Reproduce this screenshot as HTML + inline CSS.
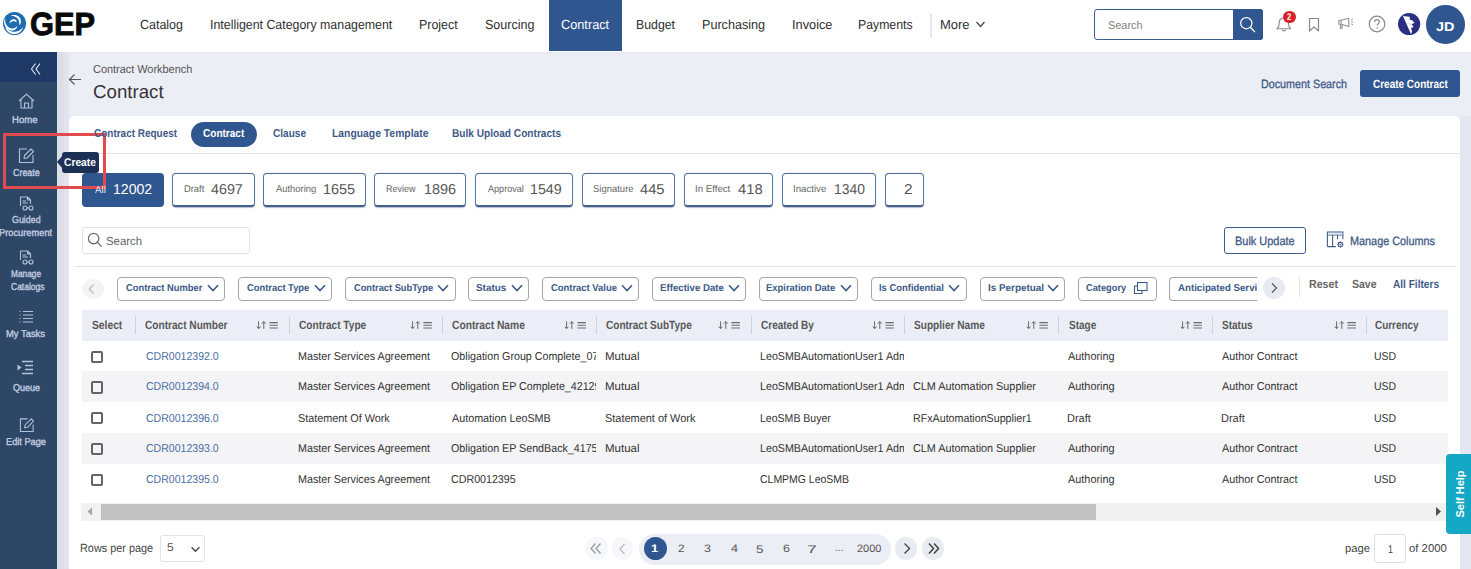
<!DOCTYPE html>
<html><head><meta charset="utf-8"><style>
html,body{margin:0;padding:0;width:1471px;height:569px;overflow:hidden;background:#fff}
body{position:relative;font-family:"Liberation Sans",sans-serif}
body div, body svg, body span.t{position:absolute}
span.t{white-space:nowrap;transform-origin:0 0;display:block;text-rendering:geometricPrecision;z-index:2}
</style></head><body>
<div style="left:0.00px;top:0.00px;width:1471.00px;height:51.00px;background:#fff"></div>
<div style="left:0.00px;top:52.00px;width:1471.00px;height:517.00px;background:#eceef6"></div>
<div style="left:57.00px;top:52.00px;width:1414.00px;height:3.00px;background:linear-gradient(#e7e8ee,#eceef6)"></div>
<div style="left:0.00px;top:51.50px;width:57.00px;height:517.50px;background:#2f4767"></div>
<div style="left:0.00px;top:51.50px;width:57.00px;height:30.20px;background:#1e3965"></div>
<div style="left:57.00px;top:52.00px;width:12.00px;height:517.00px;background:linear-gradient(90deg,#d8e2ec 0px,#d8e2ec 1px,#dcdce4 1.5px,#dddde5 6px,#e1e2eb 7px,#e2e3ec 12px)"></div>
<div style="left:1460.00px;top:116.00px;width:11.00px;height:453.00px;background:#e4e6f1"></div>
<div style="left:69.00px;top:116.00px;width:1391.00px;height:453.00px;background:#fff;border-radius:6px 6px 0 0"></div>
<svg style="left:3px;top:12px;width:23px;height:23px" viewBox="0 0 46 46">
<circle cx="23" cy="23" r="23" fill="#1f6cb0"/>
<path d="M4.85 29.61 L4.93 30.81 L5.23 31.96 L5.63 33.08 L6.12 34.17 L6.70 35.23 L7.35 36.25 L8.07 37.23 L8.87 38.15 L9.73 39.03 L10.64 39.85 L11.62 40.61 L12.65 41.30 L13.72 41.92 L14.83 42.48 L15.98 42.95 L17.16 43.35 L18.37 43.67 L19.59 43.91 L20.83 44.07 L22.08 44.14 L23.32 44.13 L24.56 44.04 L25.79 43.86 L27.00 43.60 L28.19 43.27 L29.35 42.85 L30.48 42.36 L31.57 41.80 L32.61 41.17 L33.60 40.47 L34.54 39.71 L35.42 38.89 L36.23 38.02 L36.98 37.11 L37.66 36.14 L38.26 35.14 L38.79 34.10 L39.22 33.04 L39.55 31.94 L39.68 30.78 L39.68 30.78 L38.87 31.57 L38.15 32.38 L37.43 33.15 L36.68 33.88 L35.91 34.58 L35.12 35.23 L34.30 35.83 L33.47 36.39 L32.61 36.91 L31.73 37.38 L30.83 37.81 L29.92 38.19 L29.00 38.52 L28.06 38.81 L27.11 39.05 L26.16 39.24 L25.19 39.39 L24.23 39.49 L23.25 39.54 L22.28 39.54 L21.30 39.50 L20.33 39.41 L19.36 39.27 L18.39 39.08 L17.43 38.85 L16.47 38.56 L15.53 38.23 L14.60 37.85 L13.68 37.42 L12.78 36.94 L11.89 36.41 L11.03 35.84 L10.19 35.21 L9.37 34.54 L8.58 33.82 L7.81 33.05 L7.07 32.24 L6.35 31.39 L5.64 30.50 L4.85 29.61Z" fill="#fff"/><path d="M4.47 11.42 L3.66 12.79 L3.09 14.28 L2.67 15.81 L2.39 17.36 L2.24 18.92 L2.22 20.47 L2.33 22.00 L2.56 23.50 L2.91 24.96 L3.37 26.37 L3.94 27.73 L4.61 29.01 L5.37 30.22 L6.22 31.35 L7.15 32.38 L8.14 33.32 L9.20 34.17 L10.30 34.90 L11.45 35.53 L12.62 36.05 L13.81 36.46 L15.01 36.76 L16.21 36.94 L17.39 37.02 L18.55 36.99 L19.68 36.86 L20.77 36.64 L21.81 36.31 L22.79 35.91 L23.71 35.42 L24.55 34.86 L25.31 34.24 L25.98 33.56 L26.57 32.84 L27.06 32.07 L27.46 31.28 L27.75 30.47 L27.94 29.64 L28.01 28.80 L27.88 27.88 L27.88 27.88 L27.50 28.21 L27.19 28.63 L26.86 29.07 L26.50 29.50 L26.10 29.93 L25.67 30.35 L25.19 30.75 L24.67 31.13 L24.11 31.49 L23.50 31.82 L22.85 32.11 L22.16 32.36 L21.44 32.57 L20.67 32.74 L19.87 32.85 L19.04 32.90 L18.18 32.89 L17.30 32.81 L16.40 32.67 L15.48 32.45 L14.56 32.16 L13.63 31.78 L12.71 31.33 L11.79 30.79 L10.89 30.17 L10.02 29.46 L9.18 28.66 L8.38 27.78 L7.63 26.81 L6.93 25.76 L6.29 24.63 L5.73 23.42 L5.25 22.14 L4.85 20.79 L4.55 19.37 L4.34 17.90 L4.24 16.37 L4.24 14.79 L4.35 13.16 L4.47 11.42Z" fill="#fff"/><path d="M15.81 7.57 L16.64 6.99 L17.56 6.60 L18.52 6.29 L19.49 6.06 L20.48 5.91 L21.48 5.83 L22.48 5.82 L23.48 5.87 L24.46 6.00 L25.44 6.19 L26.39 6.45 L27.32 6.77 L28.22 7.15 L29.08 7.59 L29.91 8.09 L30.70 8.64 L31.44 9.24 L32.14 9.88 L32.78 10.56 L33.36 11.29 L33.89 12.04 L34.36 12.82 L34.77 13.63 L35.11 14.45 L35.39 15.29 L35.61 16.14 L35.76 16.99 L35.85 17.83 L35.88 18.67 L35.84 19.50 L35.74 20.31 L35.57 21.10 L35.36 21.86 L35.08 22.59 L34.75 23.28 L34.37 23.93 L33.93 24.54 L33.45 25.10 L32.90 25.59 L32.19 25.99 L32.19 25.99 L32.15 25.40 L32.22 24.85 L32.29 24.31 L32.35 23.77 L32.40 23.23 L32.44 22.68 L32.45 22.13 L32.44 21.57 L32.41 21.01 L32.35 20.45 L32.28 19.88 L32.17 19.31 L32.04 18.74 L31.88 18.17 L31.70 17.59 L31.48 17.01 L31.24 16.44 L30.96 15.87 L30.66 15.30 L30.32 14.73 L29.94 14.17 L29.53 13.62 L29.08 13.08 L28.60 12.55 L28.08 12.04 L27.53 11.54 L26.93 11.06 L26.30 10.60 L25.63 10.17 L24.92 9.76 L24.17 9.39 L23.39 9.04 L22.57 8.73 L21.72 8.46 L20.83 8.23 L19.90 8.04 L18.95 7.90 L17.96 7.79 L16.92 7.71 L15.81 7.57Z" fill="#fff"/><path d="M13.80 23.00 L13.61 22.38 L13.58 21.76 L13.62 21.13 L13.73 20.52 L13.89 19.91 L14.10 19.31 L14.36 18.74 L14.66 18.19 L15.01 17.66 L15.40 17.17 L15.82 16.70 L16.28 16.28 L16.77 15.89 L17.28 15.55 L17.82 15.25 L18.38 14.99 L18.95 14.78 L19.53 14.62 L20.12 14.51 L20.71 14.45 L21.30 14.43 L21.88 14.47 L22.45 14.55 L23.00 14.67 L23.53 14.84 L24.05 15.06 L24.53 15.31 L24.98 15.60 L25.40 15.92 L25.79 16.27 L26.13 16.65 L26.43 17.05 L26.69 17.47 L26.91 17.91 L27.07 18.36 L27.19 18.81 L27.25 19.27 L27.26 19.73 L27.19 20.20 L26.98 20.70 L26.98 20.70 L26.65 20.56 L26.41 20.38 L26.19 20.21 L25.97 20.03 L25.75 19.86 L25.54 19.70 L25.31 19.54 L25.09 19.39 L24.85 19.24 L24.61 19.10 L24.37 18.97 L24.11 18.85 L23.85 18.74 L23.58 18.63 L23.29 18.53 L23.00 18.45 L22.70 18.37 L22.38 18.31 L22.06 18.26 L21.72 18.22 L21.37 18.20 L21.01 18.20 L20.64 18.22 L20.26 18.26 L19.87 18.32 L19.48 18.41 L19.07 18.52 L18.66 18.66 L18.25 18.83 L17.83 19.03 L17.41 19.27 L17.00 19.53 L16.58 19.84 L16.18 20.17 L15.78 20.55 L15.39 20.96 L15.01 21.41 L14.64 21.90 L14.26 22.43 L13.80 23.00Z" fill="#fff"/>
</svg>
<span class="t" style="left:29.98px;top:8.46px;font-size:32.17px;line-height:32.17px;font-weight:700;color:#0a0a0a;transform:scaleX(0.9582);-webkit-text-stroke:0.9px #0a0a0a;">GEP</span>
<span class="t" style="left:140.05px;top:17.54px;font-size:13.19px;line-height:13.19px;font-weight:400;color:#2f2f2f;transform:scaleX(0.9454);">Catalog</span>
<span class="t" style="left:209.59px;top:17.54px;font-size:13.19px;line-height:13.19px;font-weight:400;color:#2f2f2f;transform:scaleX(0.9384);">Intelligent Category management</span>
<span class="t" style="left:419.27px;top:17.54px;font-size:13.19px;line-height:13.19px;font-weight:400;color:#2f2f2f;transform:scaleX(0.9398);">Project</span>
<span class="t" style="left:485.43px;top:17.54px;font-size:13.19px;line-height:13.19px;font-weight:400;color:#2f2f2f;transform:scaleX(0.9495);">Sourcing</span>
<span class="t" style="left:635.97px;top:17.54px;font-size:13.19px;line-height:13.19px;font-weight:400;color:#2f2f2f;transform:scaleX(0.9335);">Budget</span>
<span class="t" style="left:702.45px;top:17.54px;font-size:13.19px;line-height:13.19px;font-weight:400;color:#2f2f2f;transform:scaleX(0.9555);">Purchasing</span>
<span class="t" style="left:791.74px;top:17.54px;font-size:13.19px;line-height:13.19px;font-weight:400;color:#2f2f2f;transform:scaleX(0.9682);">Invoice</span>
<span class="t" style="left:858.47px;top:17.54px;font-size:13.19px;line-height:13.19px;font-weight:400;color:#2f2f2f;transform:scaleX(0.9303);">Payments</span>
<span class="t" style="left:940.39px;top:17.54px;font-size:13.19px;line-height:13.19px;font-weight:400;color:#2f2f2f;transform:scaleX(0.9852);">More</span>
<div style="left:548.50px;top:0.00px;width:73.30px;height:50.50px;background:#30568f"></div>
<span class="t" style="left:560.97px;top:17.54px;font-size:13.19px;line-height:13.19px;font-weight:400;color:#fff;transform:scaleX(0.9655);">Contract</span>
<div style="left:930.00px;top:14.00px;width:1.50px;height:24.00px;background:#e4e7ef"></div>
<svg style="left:975px;top:20px;width:11px;height:9px" viewBox="0 0 11 9"><path d="M1.5 2 L5.5 6.5 L9.5 2" fill="none" stroke="#444" stroke-width="1.3"/></svg>
<div style="left:1094.00px;top:9.30px;width:169.00px;height:30.30px;background:#fff;border:1px solid #3a5c8f;border-radius:3px;box-sizing:border-box"></div>
<div style="left:1233.00px;top:9.30px;width:30.00px;height:30.30px;background:#30568f;border-radius:0 3px 3px 0"></div>
<span class="t" style="left:1108.41px;top:21.03px;font-size:11.30px;line-height:11.30px;font-weight:400;color:#808080;transform:scaleX(0.9657);">Search</span>
<svg style="left:1238px;top:15px;width:20px;height:20px" viewBox="0 0 20 20"><circle cx="8.3" cy="8.2" r="5.6" fill="none" stroke="#fff" stroke-width="1.2"/><path d="M12.3 12.3 L17 17" stroke="#fff" stroke-width="1.3"/></svg>
<svg style="left:1275px;top:15px;width:20px;height:20px" viewBox="0 0 20 20"><path d="M2 13.8 L15.7 13.8 C14.2 12.6 13.5 11.3 13.5 9 L13.5 7.5 C13.5 4.8 11.8 3 8.85 3 C5.9 3 4.2 4.8 4.2 7.5 L4.2 9 C4.2 11.3 3.5 12.6 2 13.8 Z" fill="none" stroke="#8c8c8c" stroke-width="1.1" stroke-linejoin="round"/><path d="M7.2 14.6 C7.2 16.4 10.5 16.4 10.5 14.6" fill="none" stroke="#8c8c8c" stroke-width="1.1"/></svg>
<div style="left:1283.2px;top:10.5px;width:12.4px;height:12.4px;border-radius:50%;background:#dc1f26"></div>
<span class="t" style="left:1287.26px;top:13.06px;font-size:9.86px;line-height:9.86px;font-weight:700;color:#fff;transform:scaleX(0.7787);">2</span>
<svg style="left:1307px;top:17px;width:14px;height:16px" viewBox="0 0 14 16"><path d="M2.5 1.5 L11.5 1.5 L11.5 14 L7 10 L2.5 14 Z" fill="none" stroke="#8a8a8a" stroke-width="1.2" stroke-linejoin="round"/></svg>
<svg style="left:1336px;top:15px;width:20px;height:16px" viewBox="0 0 20 16"><path d="M2.9 5.2 L5.2 5.2 L12.8 3.2 L12.8 11.6 L5.2 9.2 L2.9 9.2 Z M5.2 5.2 L5.2 9.2" fill="none" stroke="#8f8f8f" stroke-width="1.1" stroke-linejoin="round"/><path d="M4.4 9.3 L4.4 13.2 L6.1 13.2 L6.1 9.5" fill="none" stroke="#8f8f8f" stroke-width="1.1"/><path d="M15.2 4.8 L16.9 3.8 M15.2 6.8 L17 7 M15.2 8.9 L16.9 9.8" stroke="#8f8f8f" stroke-width="1"/></svg>
<svg style="left:1368px;top:15px;width:18px;height:18px" viewBox="0 0 18 18"><circle cx="9" cy="9" r="7.8" fill="none" stroke="#8a8a8a" stroke-width="1.2"/><path d="M6.6 7 C6.6 5.3 7.8 4.6 9 4.6 C10.3 4.6 11.4 5.4 11.4 6.8 C11.4 8.4 9.2 8.6 9.2 10.6" fill="none" stroke="#8a8a8a" stroke-width="1.2"/><circle cx="9.2" cy="13" r="0.8" fill="#8a8a8a"/></svg>
<svg style="left:1398.4px;top:12.7px;width:22.2px;height:22.2px" viewBox="0 0 46 46"><circle cx="23" cy="23" r="23" fill="#2a2f84"/><path d="M9.9 5.4 L13.7 6.8 L24 7.9 L25 14.1 L29.2 15.1 L34.4 20.3 L28.2 23.4 L32.3 28.6 L27.1 31.7 L29.2 37.9 L27.1 44.1 L26.1 42 Z" fill="#fff"/><path d="M17 12 L24 14 M19 22 L28 23" stroke="#c9cbe6" stroke-width="1.2"/></svg>
<div style="left:1426px;top:5.2px;width:38.6px;height:38.6px;border-radius:50%;background:#30568f"></div>
<span class="t" style="left:1436.00px;top:20.70px;font-size:12.75px;line-height:12.75px;font-weight:700;color:#fff;transform:scaleX(1.1290);">JD</span>
<svg style="left:30px;top:61.5px;width:12px;height:14px" viewBox="0 0 12 14"><path d="M5.5 1.5 L1.5 7 L5.5 12.5 M10 1.5 L6 7 L10 12.5" fill="none" stroke="#e8edf5" stroke-width="1.1"/></svg>
<svg style="left:18px;top:93px;width:17px;height:16px" viewBox="0 0 17 16"><path d="M1 8 L8.5 1.2 L16 8 M3 6.5 L3 15 L14 15 L14 6.5 M6.5 15 L6.5 10 L10.5 10 L10.5 15" fill="none" stroke="#b4c2da" stroke-width="1.1" stroke-linejoin="round"/></svg>
<span class="t" style="left:12.43px;top:115.64px;font-size:10.00px;line-height:10.00px;font-weight:400;color:#c3cfe3;transform:scaleX(0.9553);-webkit-text-stroke:0.35px #c3cfe3;">Home</span>
<svg style="left:18px;top:147px;width:17px;height:17px" viewBox="0 0 17 17"><path d="M9 2 L1.5 2 L1.5 15.5 L15 15.5 L15 8" fill="none" stroke="#b4c2da" stroke-width="1.1"/><path d="M6 11.5 L6.5 8.5 L13 2 L15.5 4.5 L9 11 Z" fill="none" stroke="#b4c2da" stroke-width="1.1" stroke-linejoin="round"/></svg>
<span class="t" style="left:12.79px;top:169.41px;font-size:10.14px;line-height:10.14px;font-weight:400;color:#c3cfe3;transform:scaleX(0.8809);-webkit-text-stroke:0.35px #c3cfe3;">Create</span>
<svg style="left:19px;top:195.5px;width:16px;height:15px" viewBox="0 0 16 15"><path d="M1.5 10 L1.5 1 L8.5 1 L11.5 4 L11.5 8 M8.5 1 L8.5 4 L11.5 4" fill="none" stroke="#b4c2da" stroke-width="1.1" stroke-linejoin="round"/><path d="M3.5 5 L7 5 M3.5 7 L9 7" stroke="#b4c2da" stroke-width="1"/><circle cx="6" cy="12" r="2" fill="none" stroke="#b4c2da" stroke-width="1.1"/><circle cx="12" cy="12" r="2" fill="none" stroke="#b4c2da" stroke-width="1.1"/><path d="M8 12 L10 12" stroke="#b4c2da" stroke-width="1"/></svg>
<span class="t" style="left:12.00px;top:215.94px;font-size:10.00px;line-height:10.00px;font-weight:400;color:#c3cfe3;transform:scaleX(0.8870);-webkit-text-stroke:0.35px #c3cfe3;">Guided</span>
<span class="t" style="left:-0.53px;top:229.44px;font-size:10.00px;line-height:10.00px;font-weight:400;color:#c3cfe3;transform:scaleX(0.9280);-webkit-text-stroke:0.35px #c3cfe3;">Procurement</span>
<svg style="left:19px;top:249.5px;width:16px;height:15px" viewBox="0 0 16 15"><path d="M1.5 10 L1.5 1 L8.5 1 L11.5 4 L11.5 8 M8.5 1 L8.5 4 L11.5 4" fill="none" stroke="#b4c2da" stroke-width="1.1" stroke-linejoin="round"/><path d="M3.5 5 L7 5 M3.5 7 L9 7" stroke="#b4c2da" stroke-width="1"/><circle cx="6" cy="12" r="2" fill="none" stroke="#b4c2da" stroke-width="1.1"/><circle cx="12" cy="12" r="2" fill="none" stroke="#b4c2da" stroke-width="1.1"/><path d="M8 12 L10 12" stroke="#b4c2da" stroke-width="1"/></svg>
<span class="t" style="left:11.45px;top:269.94px;font-size:10.00px;line-height:10.00px;font-weight:400;color:#c3cfe3;transform:scaleX(0.8309);-webkit-text-stroke:0.35px #c3cfe3;">Manage</span>
<span class="t" style="left:11.00px;top:282.94px;font-size:10.00px;line-height:10.00px;font-weight:400;color:#c3cfe3;transform:scaleX(0.8494);-webkit-text-stroke:0.35px #c3cfe3;">Catalogs</span>
<svg style="left:18px;top:310px;width:16px;height:14px" viewBox="0 0 16 14"><path d="M5 1.5 L15 1.5 M5 5 L15 5 M5 8.5 L15 8.5 M5 12 L15 12" stroke="#b4c2da" stroke-width="1.2"/><path d="M1.5 1.5 L2.5 1.5 M1.5 5 L2.5 5 M1.5 8.5 L2.5 8.5 M1.5 12 L2.5 12" stroke="#b4c2da" stroke-width="1.2"/></svg>
<span class="t" style="left:5.97px;top:330.34px;font-size:10.00px;line-height:10.00px;font-weight:400;color:#c3cfe3;transform:scaleX(0.9404);-webkit-text-stroke:0.35px #c3cfe3;">My Tasks</span>
<svg style="left:17px;top:360px;width:17px;height:16px" viewBox="0 0 17 16"><path d="M5 1.5 L16 1.5 M8 5.5 L16 5.5 M8 9.5 L16 9.5 M5 13.5 L16 13.5" stroke="#b4c2da" stroke-width="1.3"/><path d="M0.5 4.5 L4.5 7.5 L0.5 10.5 Z" fill="#b4c2da"/></svg>
<span class="t" style="left:13.09px;top:384.34px;font-size:10.00px;line-height:10.00px;font-weight:400;color:#c3cfe3;transform:scaleX(0.9023);-webkit-text-stroke:0.35px #c3cfe3;">Queue</span>
<svg style="left:18.5px;top:417px;width:16px;height:16px" viewBox="0 0 17 17"><path d="M9 2 L1.5 2 L1.5 15.5 L15 15.5 L15 8" fill="none" stroke="#b4c2da" stroke-width="1.1"/><path d="M6 11.5 L6.5 8.5 L13 2 L15.5 4.5 L9 11 Z" fill="none" stroke="#b4c2da" stroke-width="1.1" stroke-linejoin="round"/></svg>
<span class="t" style="left:5.97px;top:438.34px;font-size:10.00px;line-height:10.00px;font-weight:400;color:#c3cfe3;transform:scaleX(0.9194);-webkit-text-stroke:0.35px #c3cfe3;">Edit Page</span>
<svg style="left:68px;top:73px;width:14px;height:13px" viewBox="0 0 14 13"><path d="M13 6.5 L1.5 6.5 M6.5 1.5 L1.5 6.5 L6.5 11.5" fill="none" stroke="#555" stroke-width="1.2"/></svg>
<span class="t" style="left:92.88px;top:65.19px;font-size:11.59px;line-height:11.59px;font-weight:400;color:#555;transform:scaleX(0.9421);">Contract Workbench</span>
<span class="t" style="left:92.89px;top:83.17px;font-size:18.70px;line-height:18.70px;font-weight:400;color:#333;transform:scaleX(1.0006);">Contract</span>
<span class="t" style="left:1260.89px;top:78.12px;font-size:12.03px;line-height:12.03px;font-weight:400;color:#3e5a86;transform:scaleX(0.8945);-webkit-text-stroke:0.3px #3e5a86;">Document Search</span>
<div style="left:1360.20px;top:70.00px;width:99.80px;height:27.40px;background:#30568f;border-radius:3px"></div>
<span class="t" style="left:1372.50px;top:78.84px;font-size:11.88px;line-height:11.88px;font-weight:700;color:#fff;transform:scaleX(0.8404);">Create Contract</span>
<span class="t" style="left:93.90px;top:129.31px;font-size:11.45px;line-height:11.45px;font-weight:700;color:#3f5b89;transform:scaleX(0.8719);">Contract Request</span>
<div style="left:191.00px;top:122.00px;width:65.60px;height:24.60px;background:#30568f;border-radius:13px"></div>
<span class="t" style="left:203.40px;top:129.41px;font-size:11.45px;line-height:11.45px;font-weight:700;color:#fff;transform:scaleX(0.8777);">Contract</span>
<span class="t" style="left:272.79px;top:129.31px;font-size:11.45px;line-height:11.45px;font-weight:700;color:#3f5b89;transform:scaleX(0.8817);">Clause</span>
<span class="t" style="left:331.99px;top:129.31px;font-size:11.45px;line-height:11.45px;font-weight:700;color:#3f5b89;transform:scaleX(0.9059);">Language Template</span>
<span class="t" style="left:452.38px;top:129.31px;font-size:11.45px;line-height:11.45px;font-weight:700;color:#3f5b89;transform:scaleX(0.8850);">Bulk Upload Contracts</span>
<div style="left:69.00px;top:153.00px;width:1391.00px;height:1.00px;background:#e3e4e8"></div>
<div style="left:82.20px;top:173.30px;width:81.60px;height:34.00px;background:#30568f;border-radius:4px"></div>
<span class="t" style="left:95.00px;top:185.96px;font-size:9.86px;line-height:9.86px;font-weight:400;color:#dfe6f0;transform:scaleX(0.9989);">All</span>
<span class="t" style="left:112.66px;top:182.75px;font-size:14.35px;line-height:14.35px;font-weight:400;color:#fff;transform:scaleX(0.9820);">12002</span>
<div style="left:171.60px;top:173.30px;width:83.60px;height:33.70px;background:#fff;border:1px solid #5a76a2;border-top-color:#4d6996;border-bottom:2px solid #42608c;border-radius:4px;box-sizing:border-box;box-shadow:0 0.8px 1px rgba(40,60,100,0.35)"></div>
<span class="t" style="left:183.56px;top:185.16px;font-size:9.86px;line-height:9.86px;font-weight:400;color:#666;transform:scaleX(0.9506);">Draft</span>
<span class="t" style="left:211.16px;top:182.75px;font-size:14.35px;line-height:14.35px;font-weight:400;color:#555;transform:scaleX(0.9968);">4697</span>
<div style="left:263.40px;top:173.30px;width:102.40px;height:33.70px;background:#fff;border:1px solid #5a76a2;border-top-color:#4d6996;border-bottom:2px solid #42608c;border-radius:4px;box-sizing:border-box;box-shadow:0 0.8px 1px rgba(40,60,100,0.35)"></div>
<span class="t" style="left:275.80px;top:185.16px;font-size:9.86px;line-height:9.86px;font-weight:400;color:#666;transform:scaleX(0.9534);">Authoring</span>
<span class="t" style="left:322.93px;top:182.75px;font-size:14.35px;line-height:14.35px;font-weight:400;color:#555;transform:scaleX(1.0069);">1655</span>
<div style="left:374.30px;top:173.30px;width:92.20px;height:33.70px;background:#fff;border:1px solid #5a76a2;border-top-color:#4d6996;border-bottom:2px solid #42608c;border-radius:4px;box-sizing:border-box;box-shadow:0 0.8px 1px rgba(40,60,100,0.35)"></div>
<span class="t" style="left:385.96px;top:185.16px;font-size:9.86px;line-height:9.86px;font-weight:400;color:#666;transform:scaleX(0.9146);">Review</span>
<span class="t" style="left:423.54px;top:182.75px;font-size:14.35px;line-height:14.35px;font-weight:400;color:#555;transform:scaleX(1.0069);">1896</span>
<div style="left:474.80px;top:173.30px;width:98.70px;height:33.70px;background:#fff;border:1px solid #5a76a2;border-top-color:#4d6996;border-bottom:2px solid #42608c;border-radius:4px;box-sizing:border-box;box-shadow:0 0.8px 1px rgba(40,60,100,0.35)"></div>
<span class="t" style="left:487.50px;top:185.16px;font-size:9.86px;line-height:9.86px;font-weight:400;color:#666;transform:scaleX(0.9236);">Approval</span>
<span class="t" style="left:529.86px;top:182.75px;font-size:14.35px;line-height:14.35px;font-weight:400;color:#555;transform:scaleX(0.9917);">1549</span>
<div style="left:581.70px;top:173.30px;width:93.80px;height:33.70px;background:#fff;border:1px solid #5a76a2;border-top-color:#4d6996;border-bottom:2px solid #42608c;border-radius:4px;box-sizing:border-box;box-shadow:0 0.8px 1px rgba(40,60,100,0.35)"></div>
<span class="t" style="left:593.43px;top:185.16px;font-size:9.86px;line-height:9.86px;font-weight:400;color:#666;transform:scaleX(0.9623);">Signature</span>
<span class="t" style="left:640.38px;top:182.75px;font-size:14.35px;line-height:14.35px;font-weight:400;color:#555;transform:scaleX(1.0241);">445</span>
<div style="left:684.30px;top:173.30px;width:89.10px;height:33.70px;background:#fff;border:1px solid #5a76a2;border-top-color:#4d6996;border-bottom:2px solid #42608c;border-radius:4px;box-sizing:border-box;box-shadow:0 0.8px 1px rgba(40,60,100,0.35)"></div>
<span class="t" style="left:695.45px;top:185.16px;font-size:9.86px;line-height:9.86px;font-weight:400;color:#666;transform:scaleX(0.9825);">In Effect</span>
<span class="t" style="left:737.99px;top:182.75px;font-size:14.35px;line-height:14.35px;font-weight:400;color:#555;transform:scaleX(1.0290);">418</span>
<div style="left:782.20px;top:173.30px;width:94.20px;height:33.70px;background:#fff;border:1px solid #5a76a2;border-top-color:#4d6996;border-bottom:2px solid #42608c;border-radius:4px;box-sizing:border-box;box-shadow:0 0.8px 1px rgba(40,60,100,0.35)"></div>
<span class="t" style="left:793.16px;top:185.16px;font-size:9.86px;line-height:9.86px;font-weight:400;color:#666;transform:scaleX(0.9805);">Inactive</span>
<span class="t" style="left:833.73px;top:182.75px;font-size:14.35px;line-height:14.35px;font-weight:400;color:#555;transform:scaleX(0.9671);">1340</span>
<div style="left:885.00px;top:173.30px;width:39.30px;height:33.70px;background:#fff;border:1px solid #5a76a2;border-top-color:#4d6996;border-bottom:2px solid #42608c;border-radius:4px;box-sizing:border-box;box-shadow:0 0.8px 1px rgba(40,60,100,0.35)"></div>
<span class="t" style="left:903.77px;top:182.75px;font-size:14.35px;line-height:14.35px;font-weight:400;color:#555;transform:scaleX(1.0768);">2</span>
<div style="left:81.60px;top:227.30px;width:168.90px;height:26.90px;background:#fff;border:1px solid #e2e2e2;border-radius:3px;box-sizing:border-box"></div>
<svg style="left:87px;top:232px;width:16px;height:16px" viewBox="0 0 16 16"><circle cx="6.6" cy="6.6" r="5.2" fill="none" stroke="#666" stroke-width="1.2"/><path d="M10.4 10.4 L14.6 14.6" stroke="#666" stroke-width="1.3"/></svg>
<span class="t" style="left:105.88px;top:235.66px;font-size:11.74px;line-height:11.74px;font-weight:400;color:#666;transform:scaleX(0.9721);">Search</span>
<div style="left:1224.00px;top:227.00px;width:82.00px;height:27.40px;background:#fff;border:1px solid #3e5b89;border-radius:3px;box-sizing:border-box"></div>
<span class="t" style="left:1235.27px;top:235.32px;font-size:12.03px;line-height:12.03px;font-weight:400;color:#3e5a86;transform:scaleX(0.9113);-webkit-text-stroke:0.3px #3e5a86;">Bulk Update</span>
<svg style="left:1326px;top:231px;width:19px;height:18px" viewBox="0 0 19 18"><path d="M1.4 15.6 L1.4 1.1 L16.9 1.1 L16.9 8.2 M1.4 4 L16.9 4 M1.4 15.6 L9.8 15.6 M6.6 4 L6.6 15.6 M11.5 4 L11.5 8.2" fill="none" stroke="#3e5a86" stroke-width="1.05"/><rect x="1.9" y="1.6" width="14.5" height="1.9" fill="#dfe5ef"/><path d="M17.70 13.50 L16.61 14.46 L16.70 15.90 L15.26 15.81 L14.30 16.90 L13.34 15.81 L11.90 15.90 L11.99 14.46 L10.90 13.50 L11.99 12.54 L11.90 11.10 L13.34 11.19 L14.30 10.10 L15.26 11.19 L16.70 11.10 L16.61 12.54Z" fill="#3e5a86"/><circle cx="14.3" cy="13.5" r="1.6" fill="#fff"/><circle cx="14.3" cy="13.5" r="0.7" fill="#3e5a86"/></svg>
<span class="t" style="left:1350.38px;top:235.42px;font-size:12.03px;line-height:12.03px;font-weight:400;color:#3e5a86;transform:scaleX(0.9027);-webkit-text-stroke:0.3px #3e5a86;">Manage Columns</span>
<div style="left:74.00px;top:265.50px;width:1382.00px;height:1.00px;background:#e3e3e3"></div>
<div style="left:81.50px;top:279.00px;width:22.10px;height:20.20px;background:#f4f4f6;border-radius:50%"></div>
<svg style="left:87px;top:283px;width:10px;height:12px" viewBox="0 0 10 12"><path d="M6.5 1.5 L2.5 6 L6.5 10.5" fill="none" stroke="#aaa" stroke-width="1.1"/></svg>
<div style="left:117.20px;top:277.00px;width:108.00px;height:23.60px;background:#fff;border:1px solid #a3a5a9;border-radius:4px;box-sizing:border-box"></div>
<span class="t" style="left:125.70px;top:284.34px;font-size:10.00px;line-height:10.00px;font-weight:700;color:#3d5a87;transform:scaleX(0.9339);">Contract Number</span>
<svg style="left:206.70px;top:284px;width:12px;height:8px" viewBox="0 0 12 8"><path d="M1 1.2 L6 6.5 L11 1.2" fill="none" stroke="#3d5a87" stroke-width="1.6"/></svg>
<div style="left:238.00px;top:277.00px;width:94.00px;height:23.60px;background:#fff;border:1px solid #a3a5a9;border-radius:4px;box-sizing:border-box"></div>
<span class="t" style="left:247.10px;top:284.34px;font-size:10.00px;line-height:10.00px;font-weight:700;color:#3d5a87;transform:scaleX(0.9368);">Contract Type</span>
<svg style="left:313.50px;top:284px;width:12px;height:8px" viewBox="0 0 12 8"><path d="M1 1.2 L6 6.5 L11 1.2" fill="none" stroke="#3d5a87" stroke-width="1.6"/></svg>
<div style="left:345.00px;top:277.00px;width:110.60px;height:23.60px;background:#fff;border:1px solid #a3a5a9;border-radius:4px;box-sizing:border-box"></div>
<span class="t" style="left:354.10px;top:284.34px;font-size:10.00px;line-height:10.00px;font-weight:700;color:#3d5a87;transform:scaleX(0.9263);">Contract SubType</span>
<svg style="left:437.10px;top:284px;width:12px;height:8px" viewBox="0 0 12 8"><path d="M1 1.2 L6 6.5 L11 1.2" fill="none" stroke="#3d5a87" stroke-width="1.6"/></svg>
<div style="left:468.40px;top:277.00px;width:60.60px;height:23.60px;background:#fff;border:1px solid #a3a5a9;border-radius:4px;box-sizing:border-box"></div>
<span class="t" style="left:476.25px;top:284.34px;font-size:10.00px;line-height:10.00px;font-weight:700;color:#3d5a87;transform:scaleX(0.9883);">Status</span>
<svg style="left:510.50px;top:284px;width:12px;height:8px" viewBox="0 0 12 8"><path d="M1 1.2 L6 6.5 L11 1.2" fill="none" stroke="#3d5a87" stroke-width="1.6"/></svg>
<div style="left:541.80px;top:277.00px;width:97.20px;height:23.60px;background:#fff;border:1px solid #a3a5a9;border-radius:4px;box-sizing:border-box"></div>
<span class="t" style="left:550.50px;top:284.34px;font-size:10.00px;line-height:10.00px;font-weight:700;color:#3d5a87;transform:scaleX(0.9415);">Contract Value</span>
<svg style="left:620.50px;top:284px;width:12px;height:8px" viewBox="0 0 12 8"><path d="M1 1.2 L6 6.5 L11 1.2" fill="none" stroke="#3d5a87" stroke-width="1.6"/></svg>
<div style="left:652.00px;top:277.00px;width:94.20px;height:23.60px;background:#fff;border:1px solid #a3a5a9;border-radius:4px;box-sizing:border-box"></div>
<span class="t" style="left:660.07px;top:284.34px;font-size:10.00px;line-height:10.00px;font-weight:700;color:#3d5a87;transform:scaleX(0.9665);">Effective Date</span>
<svg style="left:727.70px;top:284px;width:12px;height:8px" viewBox="0 0 12 8"><path d="M1 1.2 L6 6.5 L11 1.2" fill="none" stroke="#3d5a87" stroke-width="1.6"/></svg>
<div style="left:758.80px;top:277.00px;width:99.60px;height:23.60px;background:#fff;border:1px solid #a3a5a9;border-radius:4px;box-sizing:border-box"></div>
<span class="t" style="left:766.47px;top:284.34px;font-size:10.00px;line-height:10.00px;font-weight:700;color:#3d5a87;transform:scaleX(0.9426);">Expiration Date</span>
<svg style="left:839.90px;top:284px;width:12px;height:8px" viewBox="0 0 12 8"><path d="M1 1.2 L6 6.5 L11 1.2" fill="none" stroke="#3d5a87" stroke-width="1.6"/></svg>
<div style="left:871.20px;top:277.00px;width:95.50px;height:23.60px;background:#fff;border:1px solid #a3a5a9;border-radius:4px;box-sizing:border-box"></div>
<span class="t" style="left:878.68px;top:284.34px;font-size:10.00px;line-height:10.00px;font-weight:700;color:#3d5a87;transform:scaleX(0.9410);">Is Confidential</span>
<svg style="left:948.20px;top:284px;width:12px;height:8px" viewBox="0 0 12 8"><path d="M1 1.2 L6 6.5 L11 1.2" fill="none" stroke="#3d5a87" stroke-width="1.6"/></svg>
<div style="left:979.50px;top:277.00px;width:85.90px;height:23.60px;background:#fff;border:1px solid #a3a5a9;border-radius:4px;box-sizing:border-box"></div>
<span class="t" style="left:987.57px;top:284.34px;font-size:10.00px;line-height:10.00px;font-weight:700;color:#3d5a87;transform:scaleX(0.9890);">Is Perpetual</span>
<svg style="left:1046.90px;top:284px;width:12px;height:8px" viewBox="0 0 12 8"><path d="M1 1.2 L6 6.5 L11 1.2" fill="none" stroke="#3d5a87" stroke-width="1.6"/></svg>
<div style="left:1078.00px;top:277.00px;width:78.60px;height:23.60px;background:#fff;border:1px solid #a3a5a9;border-radius:4px;box-sizing:border-box"></div>
<span class="t" style="left:1085.91px;top:284.34px;font-size:10.00px;line-height:10.00px;font-weight:700;color:#3d5a87;transform:scaleX(0.9275);">Category</span>
<svg style="left:1133px;top:281px;width:15px;height:14px" viewBox="0 0 15 14"><rect x="4.5" y="1.5" width="9.5" height="8" fill="none" stroke="#3d5a87" stroke-width="1.1"/><path d="M4.5 5 L1.5 5 L1.5 12.5 L9 12.5 L9 9.5" fill="none" stroke="#3d5a87" stroke-width="1.1"/></svg>
<div style="left:1169.2px;top:277px;width:88px;height:23.6px;background:#fff;border:1px solid #a3a5a9;border-right:none;border-radius:4px 0 0 4px;box-sizing:border-box"></div>
<div style="left:1169px;top:0;width:88px;height:569px;overflow:hidden"><div style="position:absolute;left:-1169px;top:0;width:1471px;height:569px"><span class="t" style="left:1178.10px;top:284.34px;font-size:10.00px;line-height:10.00px;font-weight:700;color:#3d5a87;transform:scaleX(0.9700);">Anticipated Service</span></div></div>
<div style="left:1262.70px;top:276.70px;width:22.80px;height:22.80px;background:#e8eaf2;border-radius:50%"></div>
<svg style="left:1269px;top:282px;width:10px;height:12px" viewBox="0 0 10 12"><path d="M3 1.5 L7.5 6 L3 10.5" fill="none" stroke="#555" stroke-width="1.2"/></svg>
<div style="left:1299.00px;top:276.70px;width:1.20px;height:19.90px;background:#e3e3e3"></div>
<span class="t" style="left:1308.98px;top:278.96px;font-size:11.74px;line-height:11.74px;font-weight:700;color:#666;transform:scaleX(0.9049);">Reset</span>
<span class="t" style="left:1352.47px;top:278.96px;font-size:11.74px;line-height:11.74px;font-weight:700;color:#666;transform:scaleX(0.8950);">Save</span>
<span class="t" style="left:1392.50px;top:278.96px;font-size:11.74px;line-height:11.74px;font-weight:700;color:#3e5b89;transform:scaleX(0.8603);">All Filters</span>
<div style="left:81.50px;top:310.00px;width:1366.50px;height:30.50px;background:#ebeef6"></div>
<div style="left:135.00px;top:316.00px;width:1.00px;height:18.00px;background:#cfd3dc"></div>
<div style="left:288.60px;top:316.00px;width:1.00px;height:18.00px;background:#cfd3dc"></div>
<div style="left:442.30px;top:316.00px;width:1.00px;height:18.00px;background:#cfd3dc"></div>
<div style="left:596.40px;top:316.00px;width:1.00px;height:18.00px;background:#cfd3dc"></div>
<div style="left:750.60px;top:316.00px;width:1.00px;height:18.00px;background:#cfd3dc"></div>
<div style="left:904.40px;top:316.00px;width:1.00px;height:18.00px;background:#cfd3dc"></div>
<div style="left:1058.40px;top:316.00px;width:1.00px;height:18.00px;background:#cfd3dc"></div>
<div style="left:1212.30px;top:316.00px;width:1.00px;height:18.00px;background:#cfd3dc"></div>
<div style="left:1365.90px;top:316.00px;width:1.00px;height:18.00px;background:#cfd3dc"></div>
<span class="t" style="left:91.60px;top:320.04px;font-size:11.88px;line-height:11.88px;font-weight:700;color:#585858;transform:scaleX(0.8658);">Select</span>
<span class="t" style="left:145.30px;top:320.04px;font-size:11.88px;line-height:11.88px;font-weight:700;color:#585858;transform:scaleX(0.8507);">Contract Number</span>
<span class="t" style="left:298.70px;top:320.04px;font-size:11.88px;line-height:11.88px;font-weight:700;color:#585858;transform:scaleX(0.8507);">Contract Type</span>
<span class="t" style="left:452.20px;top:320.04px;font-size:11.88px;line-height:11.88px;font-weight:700;color:#585858;transform:scaleX(0.8622);">Contract Name</span>
<span class="t" style="left:606.40px;top:320.04px;font-size:11.88px;line-height:11.88px;font-weight:700;color:#585858;transform:scaleX(0.8454);">Contract SubType</span>
<span class="t" style="left:760.50px;top:320.04px;font-size:11.88px;line-height:11.88px;font-weight:700;color:#585858;transform:scaleX(0.8431);">Created By</span>
<span class="t" style="left:914.20px;top:320.04px;font-size:11.88px;line-height:11.88px;font-weight:700;color:#585858;transform:scaleX(0.8511);">Supplier Name</span>
<span class="t" style="left:1068.60px;top:320.04px;font-size:11.88px;line-height:11.88px;font-weight:700;color:#585858;transform:scaleX(0.8430);">Stage</span>
<span class="t" style="left:1221.90px;top:320.04px;font-size:11.88px;line-height:11.88px;font-weight:700;color:#585858;transform:scaleX(0.8430);">Status</span>
<span class="t" style="left:1375.21px;top:320.04px;font-size:11.88px;line-height:11.88px;font-weight:700;color:#585858;transform:scaleX(0.8339);">Currency</span>
<svg style="left:256.3px;top:319px;width:23px;height:12px" viewBox="0 0 23 12"><path d="M2.6 2.3 L2.6 9.6 M0.7 7.6 L2.6 9.7 L4.5 7.6 M7.8 9.9 L7.8 2.6 M5.9 4.6 L7.8 2.5 L9.7 4.6" fill="none" stroke="#6a6a6a" stroke-width="1"/><path d="M13.4 3.6 L21.9 3.6 M13.4 6.3 L21.9 6.3 M13.4 9 L21.9 9" stroke="#6a6a6a" stroke-width="1.1"/></svg>
<svg style="left:410.0px;top:319px;width:23px;height:12px" viewBox="0 0 23 12"><path d="M2.6 2.3 L2.6 9.6 M0.7 7.6 L2.6 9.7 L4.5 7.6 M7.8 9.9 L7.8 2.6 M5.9 4.6 L7.8 2.5 L9.7 4.6" fill="none" stroke="#6a6a6a" stroke-width="1"/><path d="M13.4 3.6 L21.9 3.6 M13.4 6.3 L21.9 6.3 M13.4 9 L21.9 9" stroke="#6a6a6a" stroke-width="1.1"/></svg>
<svg style="left:564.1px;top:319px;width:23px;height:12px" viewBox="0 0 23 12"><path d="M2.6 2.3 L2.6 9.6 M0.7 7.6 L2.6 9.7 L4.5 7.6 M7.8 9.9 L7.8 2.6 M5.9 4.6 L7.8 2.5 L9.7 4.6" fill="none" stroke="#6a6a6a" stroke-width="1"/><path d="M13.4 3.6 L21.9 3.6 M13.4 6.3 L21.9 6.3 M13.4 9 L21.9 9" stroke="#6a6a6a" stroke-width="1.1"/></svg>
<svg style="left:718.3px;top:319px;width:23px;height:12px" viewBox="0 0 23 12"><path d="M2.6 2.3 L2.6 9.6 M0.7 7.6 L2.6 9.7 L4.5 7.6 M7.8 9.9 L7.8 2.6 M5.9 4.6 L7.8 2.5 L9.7 4.6" fill="none" stroke="#6a6a6a" stroke-width="1"/><path d="M13.4 3.6 L21.9 3.6 M13.4 6.3 L21.9 6.3 M13.4 9 L21.9 9" stroke="#6a6a6a" stroke-width="1.1"/></svg>
<svg style="left:872.1px;top:319px;width:23px;height:12px" viewBox="0 0 23 12"><path d="M2.6 2.3 L2.6 9.6 M0.7 7.6 L2.6 9.7 L4.5 7.6 M7.8 9.9 L7.8 2.6 M5.9 4.6 L7.8 2.5 L9.7 4.6" fill="none" stroke="#6a6a6a" stroke-width="1"/><path d="M13.4 3.6 L21.9 3.6 M13.4 6.3 L21.9 6.3 M13.4 9 L21.9 9" stroke="#6a6a6a" stroke-width="1.1"/></svg>
<svg style="left:1026.1px;top:319px;width:23px;height:12px" viewBox="0 0 23 12"><path d="M2.6 2.3 L2.6 9.6 M0.7 7.6 L2.6 9.7 L4.5 7.6 M7.8 9.9 L7.8 2.6 M5.9 4.6 L7.8 2.5 L9.7 4.6" fill="none" stroke="#6a6a6a" stroke-width="1"/><path d="M13.4 3.6 L21.9 3.6 M13.4 6.3 L21.9 6.3 M13.4 9 L21.9 9" stroke="#6a6a6a" stroke-width="1.1"/></svg>
<svg style="left:1180.0px;top:319px;width:23px;height:12px" viewBox="0 0 23 12"><path d="M2.6 2.3 L2.6 9.6 M0.7 7.6 L2.6 9.7 L4.5 7.6 M7.8 9.9 L7.8 2.6 M5.9 4.6 L7.8 2.5 L9.7 4.6" fill="none" stroke="#6a6a6a" stroke-width="1"/><path d="M13.4 3.6 L21.9 3.6 M13.4 6.3 L21.9 6.3 M13.4 9 L21.9 9" stroke="#6a6a6a" stroke-width="1.1"/></svg>
<svg style="left:1333.6px;top:319px;width:23px;height:12px" viewBox="0 0 23 12"><path d="M2.6 2.3 L2.6 9.6 M0.7 7.6 L2.6 9.7 L4.5 7.6 M7.8 9.9 L7.8 2.6 M5.9 4.6 L7.8 2.5 L9.7 4.6" fill="none" stroke="#6a6a6a" stroke-width="1"/><path d="M13.4 3.6 L21.9 3.6 M13.4 6.3 L21.9 6.3 M13.4 9 L21.9 9" stroke="#6a6a6a" stroke-width="1.1"/></svg>
<div style="left:91.00px;top:350.70px;width:12.00px;height:12.20px;border:2px solid #636363;border-radius:2px;box-sizing:border-box"></div>
<div style="left:141.7px;top:0;width:146.90000000000003px;height:569px;overflow:hidden"><div style="position:absolute;left:-141.7px;top:0;width:1471px;height:569px"><span class="t" style="left:146.07px;top:352.06px;font-size:11.45px;line-height:11.45px;font-weight:400;color:#4a6ea3;transform:scaleX(0.9226);">CDR0012392.0</span></div></div>
<div style="left:293.6px;top:0;width:148.7px;height:569px;overflow:hidden"><div style="position:absolute;left:-293.6px;top:0;width:1471px;height:569px"><span class="t" style="left:297.79px;top:352.06px;font-size:11.45px;line-height:11.45px;font-weight:400;color:#333;transform:scaleX(0.9400);">Master Services Agreement</span></div></div>
<div style="left:447.4px;top:0;width:149.0px;height:569px;overflow:hidden"><div style="position:absolute;left:-447.4px;top:0;width:1471px;height:569px"><span class="t" style="left:451.20px;top:352.06px;font-size:11.45px;line-height:11.45px;font-weight:400;color:#333;transform:scaleX(0.9342);">Obligation Group Complete_0712</span></div></div>
<div style="left:601.4px;top:0;width:149.20000000000005px;height:569px;overflow:hidden"><div style="position:absolute;left:-601.4px;top:0;width:1471px;height:569px"><span class="t" style="left:605.17px;top:352.06px;font-size:11.45px;line-height:11.45px;font-weight:400;color:#333;transform:scaleX(1.0043);">Mutual</span></div></div>
<div style="left:755.6px;top:0;width:148.79999999999995px;height:569px;overflow:hidden"><div style="position:absolute;left:-755.6px;top:0;width:1471px;height:569px"><span class="t" style="left:759.80px;top:352.06px;font-size:11.45px;line-height:11.45px;font-weight:400;color:#333;transform:scaleX(0.9342);">LeoSMBAutomationUser1 Admin</span></div></div>
<div style="left:1063.1px;top:0;width:149.20000000000005px;height:569px;overflow:hidden"><div style="position:absolute;left:-1063.1px;top:0;width:1471px;height:569px"><span class="t" style="left:1068.30px;top:352.06px;font-size:11.45px;line-height:11.45px;font-weight:400;color:#333;transform:scaleX(0.9510);">Authoring</span></div></div>
<div style="left:1216.7px;top:0;width:149.20000000000005px;height:569px;overflow:hidden"><div style="position:absolute;left:-1216.7px;top:0;width:1471px;height:569px"><span class="t" style="left:1222.10px;top:352.06px;font-size:11.45px;line-height:11.45px;font-weight:400;color:#333;transform:scaleX(0.9414);">Author Contract</span></div></div>
<div style="left:1370.8px;top:0;width:77.20000000000005px;height:569px;overflow:hidden"><div style="position:absolute;left:-1370.8px;top:0;width:1471px;height:569px"><span class="t" style="left:1374.26px;top:352.06px;font-size:11.45px;line-height:11.45px;font-weight:400;color:#333;transform:scaleX(0.9173);">USD</span></div></div>
<div style="left:81.50px;top:371.25px;width:1366.50px;height:30.75px;background:#f4f4f6"></div>
<div style="left:91.00px;top:381.45px;width:12.00px;height:12.20px;border:2px solid #636363;border-radius:2px;box-sizing:border-box"></div>
<div style="left:141.7px;top:0;width:146.90000000000003px;height:569px;overflow:hidden"><div style="position:absolute;left:-141.7px;top:0;width:1471px;height:569px"><span class="t" style="left:146.07px;top:382.31px;font-size:11.45px;line-height:11.45px;font-weight:400;color:#4a6ea3;transform:scaleX(0.9226);">CDR0012394.0</span></div></div>
<div style="left:293.6px;top:0;width:148.7px;height:569px;overflow:hidden"><div style="position:absolute;left:-293.6px;top:0;width:1471px;height:569px"><span class="t" style="left:297.79px;top:382.31px;font-size:11.45px;line-height:11.45px;font-weight:400;color:#333;transform:scaleX(0.9400);">Master Services Agreement</span></div></div>
<div style="left:447.4px;top:0;width:149.0px;height:569px;overflow:hidden"><div style="position:absolute;left:-447.4px;top:0;width:1471px;height:569px"><span class="t" style="left:451.20px;top:382.31px;font-size:11.45px;line-height:11.45px;font-weight:400;color:#333;transform:scaleX(0.9342);">Obligation EP Complete_42129</span></div></div>
<div style="left:601.4px;top:0;width:149.20000000000005px;height:569px;overflow:hidden"><div style="position:absolute;left:-601.4px;top:0;width:1471px;height:569px"><span class="t" style="left:605.17px;top:382.31px;font-size:11.45px;line-height:11.45px;font-weight:400;color:#333;transform:scaleX(1.0043);">Mutual</span></div></div>
<div style="left:755.6px;top:0;width:148.79999999999995px;height:569px;overflow:hidden"><div style="position:absolute;left:-755.6px;top:0;width:1471px;height:569px"><span class="t" style="left:759.80px;top:382.31px;font-size:11.45px;line-height:11.45px;font-weight:400;color:#333;transform:scaleX(0.9342);">LeoSMBAutomationUser1 Admin</span></div></div>
<div style="left:909.1px;top:0;width:149.30000000000007px;height:569px;overflow:hidden"><div style="position:absolute;left:-909.1px;top:0;width:1471px;height:569px"><span class="t" style="left:913.29px;top:382.31px;font-size:11.45px;line-height:11.45px;font-weight:400;color:#333;transform:scaleX(0.9474);">CLM Automation Supplier</span></div></div>
<div style="left:1063.1px;top:0;width:149.20000000000005px;height:569px;overflow:hidden"><div style="position:absolute;left:-1063.1px;top:0;width:1471px;height:569px"><span class="t" style="left:1068.30px;top:382.31px;font-size:11.45px;line-height:11.45px;font-weight:400;color:#333;transform:scaleX(0.9510);">Authoring</span></div></div>
<div style="left:1216.7px;top:0;width:149.20000000000005px;height:569px;overflow:hidden"><div style="position:absolute;left:-1216.7px;top:0;width:1471px;height:569px"><span class="t" style="left:1222.10px;top:382.31px;font-size:11.45px;line-height:11.45px;font-weight:400;color:#333;transform:scaleX(0.9414);">Author Contract</span></div></div>
<div style="left:1370.8px;top:0;width:77.20000000000005px;height:569px;overflow:hidden"><div style="position:absolute;left:-1370.8px;top:0;width:1471px;height:569px"><span class="t" style="left:1374.26px;top:382.31px;font-size:11.45px;line-height:11.45px;font-weight:400;color:#333;transform:scaleX(0.9173);">USD</span></div></div>
<div style="left:91.00px;top:412.20px;width:12.00px;height:12.20px;border:2px solid #636363;border-radius:2px;box-sizing:border-box"></div>
<div style="left:141.7px;top:0;width:146.90000000000003px;height:569px;overflow:hidden"><div style="position:absolute;left:-141.7px;top:0;width:1471px;height:569px"><span class="t" style="left:146.07px;top:413.56px;font-size:11.45px;line-height:11.45px;font-weight:400;color:#4a6ea3;transform:scaleX(0.9226);">CDR0012396.0</span></div></div>
<div style="left:293.6px;top:0;width:148.7px;height:569px;overflow:hidden"><div style="position:absolute;left:-293.6px;top:0;width:1471px;height:569px"><span class="t" style="left:297.78px;top:413.56px;font-size:11.45px;line-height:11.45px;font-weight:400;color:#333;transform:scaleX(0.9457);">Statement Of Work</span></div></div>
<div style="left:447.4px;top:0;width:149.0px;height:569px;overflow:hidden"><div style="position:absolute;left:-447.4px;top:0;width:1471px;height:569px"><span class="t" style="left:452.20px;top:413.56px;font-size:11.45px;line-height:11.45px;font-weight:400;color:#333;transform:scaleX(0.9411);">Automation LeoSMB</span></div></div>
<div style="left:601.4px;top:0;width:149.20000000000005px;height:569px;overflow:hidden"><div style="position:absolute;left:-601.4px;top:0;width:1471px;height:569px"><span class="t" style="left:605.19px;top:413.56px;font-size:11.45px;line-height:11.45px;font-weight:400;color:#333;transform:scaleX(0.9571);">Statement of Work</span></div></div>
<div style="left:755.6px;top:0;width:148.79999999999995px;height:569px;overflow:hidden"><div style="position:absolute;left:-755.6px;top:0;width:1471px;height:569px"><span class="t" style="left:759.77px;top:413.56px;font-size:11.45px;line-height:11.45px;font-weight:400;color:#333;transform:scaleX(0.9212);">LeoSMB Buyer</span></div></div>
<div style="left:909.1px;top:0;width:149.30000000000007px;height:569px;overflow:hidden"><div style="position:absolute;left:-909.1px;top:0;width:1471px;height:569px"><span class="t" style="left:913.29px;top:413.56px;font-size:11.45px;line-height:11.45px;font-weight:400;color:#333;transform:scaleX(0.9337);">RFxAutomationSupplier1</span></div></div>
<div style="left:1063.1px;top:0;width:149.20000000000005px;height:569px;overflow:hidden"><div style="position:absolute;left:-1063.1px;top:0;width:1471px;height:569px"><span class="t" style="left:1067.27px;top:413.56px;font-size:11.45px;line-height:11.45px;font-weight:400;color:#333;transform:scaleX(0.9575);">Draft</span></div></div>
<div style="left:1216.7px;top:0;width:149.20000000000005px;height:569px;overflow:hidden"><div style="position:absolute;left:-1216.7px;top:0;width:1471px;height:569px"><span class="t" style="left:1221.05px;top:413.56px;font-size:11.45px;line-height:11.45px;font-weight:400;color:#333;transform:scaleX(0.9575);">Draft</span></div></div>
<div style="left:1370.8px;top:0;width:77.20000000000005px;height:569px;overflow:hidden"><div style="position:absolute;left:-1370.8px;top:0;width:1471px;height:569px"><span class="t" style="left:1374.26px;top:413.56px;font-size:11.45px;line-height:11.45px;font-weight:400;color:#333;transform:scaleX(0.9173);">USD</span></div></div>
<div style="left:81.50px;top:432.75px;width:1366.50px;height:30.75px;background:#f4f4f6"></div>
<div style="left:91.00px;top:442.95px;width:12.00px;height:12.20px;border:2px solid #636363;border-radius:2px;box-sizing:border-box"></div>
<div style="left:141.7px;top:0;width:146.90000000000003px;height:569px;overflow:hidden"><div style="position:absolute;left:-141.7px;top:0;width:1471px;height:569px"><span class="t" style="left:146.07px;top:443.81px;font-size:11.45px;line-height:11.45px;font-weight:400;color:#4a6ea3;transform:scaleX(0.9226);">CDR0012393.0</span></div></div>
<div style="left:293.6px;top:0;width:148.7px;height:569px;overflow:hidden"><div style="position:absolute;left:-293.6px;top:0;width:1471px;height:569px"><span class="t" style="left:297.79px;top:443.81px;font-size:11.45px;line-height:11.45px;font-weight:400;color:#333;transform:scaleX(0.9400);">Master Services Agreement</span></div></div>
<div style="left:447.4px;top:0;width:149.0px;height:569px;overflow:hidden"><div style="position:absolute;left:-447.4px;top:0;width:1471px;height:569px"><span class="t" style="left:451.20px;top:443.81px;font-size:11.45px;line-height:11.45px;font-weight:400;color:#333;transform:scaleX(0.9342);">Obligation EP SendBack_4175</span></div></div>
<div style="left:601.4px;top:0;width:149.20000000000005px;height:569px;overflow:hidden"><div style="position:absolute;left:-601.4px;top:0;width:1471px;height:569px"><span class="t" style="left:605.17px;top:443.81px;font-size:11.45px;line-height:11.45px;font-weight:400;color:#333;transform:scaleX(1.0043);">Mutual</span></div></div>
<div style="left:755.6px;top:0;width:148.79999999999995px;height:569px;overflow:hidden"><div style="position:absolute;left:-755.6px;top:0;width:1471px;height:569px"><span class="t" style="left:759.80px;top:443.81px;font-size:11.45px;line-height:11.45px;font-weight:400;color:#333;transform:scaleX(0.9342);">LeoSMBAutomationUser1 Admin</span></div></div>
<div style="left:909.1px;top:0;width:149.30000000000007px;height:569px;overflow:hidden"><div style="position:absolute;left:-909.1px;top:0;width:1471px;height:569px"><span class="t" style="left:913.29px;top:443.81px;font-size:11.45px;line-height:11.45px;font-weight:400;color:#333;transform:scaleX(0.9474);">CLM Automation Supplier</span></div></div>
<div style="left:1063.1px;top:0;width:149.20000000000005px;height:569px;overflow:hidden"><div style="position:absolute;left:-1063.1px;top:0;width:1471px;height:569px"><span class="t" style="left:1068.30px;top:443.81px;font-size:11.45px;line-height:11.45px;font-weight:400;color:#333;transform:scaleX(0.9510);">Authoring</span></div></div>
<div style="left:1216.7px;top:0;width:149.20000000000005px;height:569px;overflow:hidden"><div style="position:absolute;left:-1216.7px;top:0;width:1471px;height:569px"><span class="t" style="left:1222.10px;top:443.81px;font-size:11.45px;line-height:11.45px;font-weight:400;color:#333;transform:scaleX(0.9414);">Author Contract</span></div></div>
<div style="left:1370.8px;top:0;width:77.20000000000005px;height:569px;overflow:hidden"><div style="position:absolute;left:-1370.8px;top:0;width:1471px;height:569px"><span class="t" style="left:1374.26px;top:443.81px;font-size:11.45px;line-height:11.45px;font-weight:400;color:#333;transform:scaleX(0.9173);">USD</span></div></div>
<div style="left:91.00px;top:473.70px;width:12.00px;height:12.20px;border:2px solid #636363;border-radius:2px;box-sizing:border-box"></div>
<div style="left:141.7px;top:0;width:146.90000000000003px;height:569px;overflow:hidden"><div style="position:absolute;left:-141.7px;top:0;width:1471px;height:569px"><span class="t" style="left:146.07px;top:475.06px;font-size:11.45px;line-height:11.45px;font-weight:400;color:#4a6ea3;transform:scaleX(0.9226);">CDR0012395.0</span></div></div>
<div style="left:293.6px;top:0;width:148.7px;height:569px;overflow:hidden"><div style="position:absolute;left:-293.6px;top:0;width:1471px;height:569px"><span class="t" style="left:297.79px;top:475.06px;font-size:11.45px;line-height:11.45px;font-weight:400;color:#333;transform:scaleX(0.9400);">Master Services Agreement</span></div></div>
<div style="left:447.4px;top:0;width:149.0px;height:569px;overflow:hidden"><div style="position:absolute;left:-447.4px;top:0;width:1471px;height:569px"><span class="t" style="left:451.18px;top:475.06px;font-size:11.45px;line-height:11.45px;font-weight:400;color:#333;transform:scaleX(0.9333);">CDR0012395</span></div></div>
<div style="left:755.6px;top:0;width:148.79999999999995px;height:569px;overflow:hidden"><div style="position:absolute;left:-755.6px;top:0;width:1471px;height:569px"><span class="t" style="left:759.78px;top:475.06px;font-size:11.45px;line-height:11.45px;font-weight:400;color:#333;transform:scaleX(0.9153);">CLMPMG LeoSMB</span></div></div>
<div style="left:1063.1px;top:0;width:149.20000000000005px;height:569px;overflow:hidden"><div style="position:absolute;left:-1063.1px;top:0;width:1471px;height:569px"><span class="t" style="left:1068.30px;top:475.06px;font-size:11.45px;line-height:11.45px;font-weight:400;color:#333;transform:scaleX(0.9510);">Authoring</span></div></div>
<div style="left:1216.7px;top:0;width:149.20000000000005px;height:569px;overflow:hidden"><div style="position:absolute;left:-1216.7px;top:0;width:1471px;height:569px"><span class="t" style="left:1222.10px;top:475.06px;font-size:11.45px;line-height:11.45px;font-weight:400;color:#333;transform:scaleX(0.9414);">Author Contract</span></div></div>
<div style="left:1370.8px;top:0;width:77.20000000000005px;height:569px;overflow:hidden"><div style="position:absolute;left:-1370.8px;top:0;width:1471px;height:569px"><span class="t" style="left:1374.26px;top:475.06px;font-size:11.45px;line-height:11.45px;font-weight:400;color:#333;transform:scaleX(0.9173);">USD</span></div></div>
<div style="left:81.00px;top:502.50px;width:1367.00px;height:18.00px;background:#f1f1f1"></div>
<div style="left:100.80px;top:503.50px;width:994.90px;height:16.00px;background:#c1c1c1"></div>
<svg style="left:86px;top:507px;width:8px;height:9px" viewBox="0 0 8 9"><path d="M6 0.5 L1.5 4.5 L6 8.5 Z" fill="#a3a3a3"/></svg>
<svg style="left:1435px;top:507px;width:8px;height:9px" viewBox="0 0 8 9"><path d="M1 0 L6 4.5 L1 9 Z" fill="#505050"/></svg>
<span class="t" style="left:80.38px;top:543.14px;font-size:11.88px;line-height:11.88px;font-weight:400;color:#444;transform:scaleX(0.9151);">Rows per page</span>
<div style="left:160.40px;top:535.20px;width:45.10px;height:27.30px;background:#fff;border:1px solid #e2e3e6;border-radius:3px;box-sizing:border-box"></div>
<span class="t" style="left:167.03px;top:543.33px;font-size:11.30px;line-height:11.30px;font-weight:400;color:#555;transform:scaleX(1.0572);">5</span>
<svg style="left:189.5px;top:545px;width:11px;height:8px" viewBox="0 0 11 8"><path d="M1.6 2.3 L5.5 6.2 L9.4 2.3" fill="none" stroke="#444" stroke-width="1.4"/></svg>
<div style="left:584.50px;top:537.00px;width:23.10px;height:23.00px;background:#f6f7fa;border-radius:50%"></div>
<svg style="left:589px;top:542px;width:14px;height:13px" viewBox="0 0 14 13"><path d="M6.5 1.5 L2 6.5 L6.5 11.5 M11.5 1.5 L7 6.5 L11.5 11.5" fill="none" stroke="#9a9a9a" stroke-width="1.3"/></svg>
<div style="left:612.40px;top:537.00px;width:21.10px;height:23.00px;background:#f6f7fa;border-radius:50%"></div>
<svg style="left:618px;top:543px;width:9px;height:12px" viewBox="0 0 9 12"><path d="M6.5 1 L2 6 L6.5 11" fill="none" stroke="#aaa" stroke-width="1.1"/></svg>
<div style="left:638.90px;top:533.80px;width:251.70px;height:31.30px;background:#eceef6;border-radius:16px"></div>
<div style="left:644px;top:537.3px;width:23px;height:23px;border-radius:50%;background:#30568f"></div>
<span class="t" style="left:651.20px;top:543.50px;font-size:10.87px;line-height:10.87px;font-weight:700;color:#fff;transform:scaleX(1.1935);">1</span>
<span class="t" style="left:677.78px;top:543.50px;font-size:10.87px;line-height:10.87px;font-weight:400;color:#555;transform:scaleX(1.0876);">2</span>
<span class="t" style="left:704.02px;top:543.50px;font-size:10.87px;line-height:10.87px;font-weight:400;color:#555;transform:scaleX(1.1491);">3</span>
<span class="t" style="left:731.23px;top:543.50px;font-size:10.87px;line-height:10.87px;font-weight:400;color:#555;transform:scaleX(1.1644);">4</span>
<span class="t" style="left:756.41px;top:544.50px;font-size:10.87px;line-height:10.87px;font-weight:400;color:#555;transform:scaleX(1.2542);">5</span>
<span class="t" style="left:783.02px;top:543.50px;font-size:10.87px;line-height:10.87px;font-weight:400;color:#555;transform:scaleX(1.1491);">6</span>
<span class="t" style="left:807.17px;top:544.50px;font-size:10.87px;line-height:10.87px;font-weight:400;color:#555;transform:scaleX(1.6171);">7</span>
<span class="t" style="left:856.64px;top:543.50px;font-size:10.87px;line-height:10.87px;font-weight:400;color:#555;transform:scaleX(1.0073);">2000</span>
<span class="t" style="left:834.80px;top:542.70px;font-size:10.87px;line-height:10.87px;font-weight:400;color:#666;transform:scaleX(1.0000);">...</span>
<div style="left:895.30px;top:537.00px;width:22.20px;height:22.70px;background:#e9ebf2;border-radius:50%"></div>
<svg style="left:902px;top:542px;width:10px;height:13px" viewBox="0 0 10 13"><path d="M2.5 1.5 L7.5 6.5 L2.5 11.5" fill="none" stroke="#444" stroke-width="1.4"/></svg>
<div style="left:922.10px;top:537.00px;width:22.20px;height:22.70px;background:#e9ebf2;border-radius:50%"></div>
<svg style="left:927px;top:542px;width:14px;height:13px" viewBox="0 0 14 13"><path d="M2 1.5 L6.5 6.5 L2 11.5 M7 1.5 L11.5 6.5 L7 11.5" fill="none" stroke="#444" stroke-width="1.6"/></svg>
<span class="t" style="left:1345.40px;top:543.93px;font-size:11.30px;line-height:11.30px;font-weight:400;color:#444;transform:scaleX(0.9939);">page</span>
<div style="left:1374.40px;top:534.30px;width:31.40px;height:28.80px;background:#fff;border:1px solid #e0e0e0;border-radius:3px;box-sizing:border-box"></div>
<span class="t" style="left:1388.40px;top:544.73px;font-size:11.30px;line-height:11.30px;font-weight:400;color:#444;transform:scaleX(0.7831);">1</span>
<span class="t" style="left:1409.44px;top:543.83px;font-size:11.30px;line-height:11.30px;font-weight:400;color:#444;transform:scaleX(1.0042);">of 2000</span>
<div style="left:1446.00px;top:454.00px;width:34.00px;height:79.70px;background:#15a8c4;border-radius:4px 0 0 4px"></div>
<div style="left:1414px;top:488px;width:92px;height:12px;transform:rotate(-90deg);font-family:'Liberation Sans';font-weight:700;font-size:11px;line-height:12px;color:#fff;text-align:center">Self Help</div>
<div style="left:2.9px;top:132.9px;width:103px;height:56px;border:3px solid #e14b4f;box-sizing:border-box;z-index:1"></div>
<svg style="left:57px;top:155px;width:6px;height:14px" viewBox="0 0 6 14"><path d="M6 0 L0 7 L6 14 Z" fill="#1c2f55"/></svg>
<div style="left:61.50px;top:152.00px;width:37.10px;height:20.80px;background:#1c2f55;border-radius:3px"></div>
<span class="t" style="left:64.20px;top:158.15px;font-size:11.16px;line-height:11.16px;font-weight:700;color:#fff;transform:scaleX(0.9179);">Create</span>
</body></html>
